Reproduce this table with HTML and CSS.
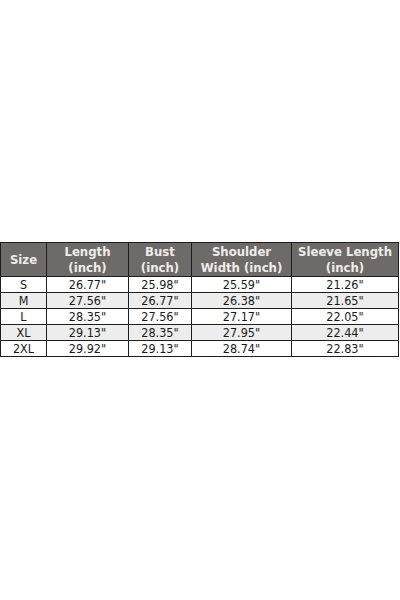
FILE: index.html
```html
<!DOCTYPE html>
<html>
<head>
<meta charset="utf-8">
<link rel="stylesheet" href="styles.css">
</head>
<body>
<div class="page">
<table class="size-table">
<colgroup>
<col class="c1"><col class="c2"><col class="c3"><col class="c4"><col class="c5">
</colgroup>
<thead>
<tr><th>Size</th><th>Length<br>(inch)</th><th>Bust<br>(inch)</th><th>Shoulder<br>Width (inch)</th><th>Sleeve Length<br>(inch)</th></tr>
</thead>
<tbody>
<tr><td>S</td><td>26.77"</td><td>25.98"</td><td>25.59"</td><td>21.26"</td></tr>
<tr class="alt"><td>M</td><td>27.56"</td><td>26.77"</td><td>26.38"</td><td>21.65"</td></tr>
<tr><td>L</td><td>28.35"</td><td>27.56"</td><td>27.17"</td><td>22.05"</td></tr>
<tr class="alt"><td>XL</td><td>29.13"</td><td>28.35"</td><td>27.95"</td><td>22.44"</td></tr>
<tr><td>2XL</td><td>29.92"</td><td>29.13"</td><td>28.74"</td><td>22.83"</td></tr>
</tbody>
</table>
</div>
</body>
</html>
```
FILE: styles.css
```css
html, body {
  margin: 0;
  padding: 0;
  background: #ffffff;
}
.page {
  width: 400px;
  height: 600px;
  padding-top: 242px;
  box-sizing: border-box;
}
.size-table {
  border-collapse: collapse;
  table-layout: fixed;
  width: 398px;
  margin-left: 0;
  font-family: "DejaVu Sans Condensed", "Liberation Sans Narrow", "Roboto", sans-serif;
  color: #1a1a1a;
}
.c1 { width: 46px; }
.c2 { width: 82px; }
.c3 { width: 63px; }
.c4 { width: 100px; }
.c5 { width: 107px; }
.size-table th,
.size-table td {
  border: 1px solid #1e1e1e;
  text-align: center;
  padding: 0;
}
.size-table th {
  background: #6e6a67;
  color: #efedeb;
  font-weight: bold;
  font-size: 13px;
  line-height: 16px;
  height: 33px;
}
.size-table td {
  font-size: 12.5px;
  line-height: 15px;
  height: 15px;
}
.size-table tr.alt td {
  background: #ededed;
}
```
